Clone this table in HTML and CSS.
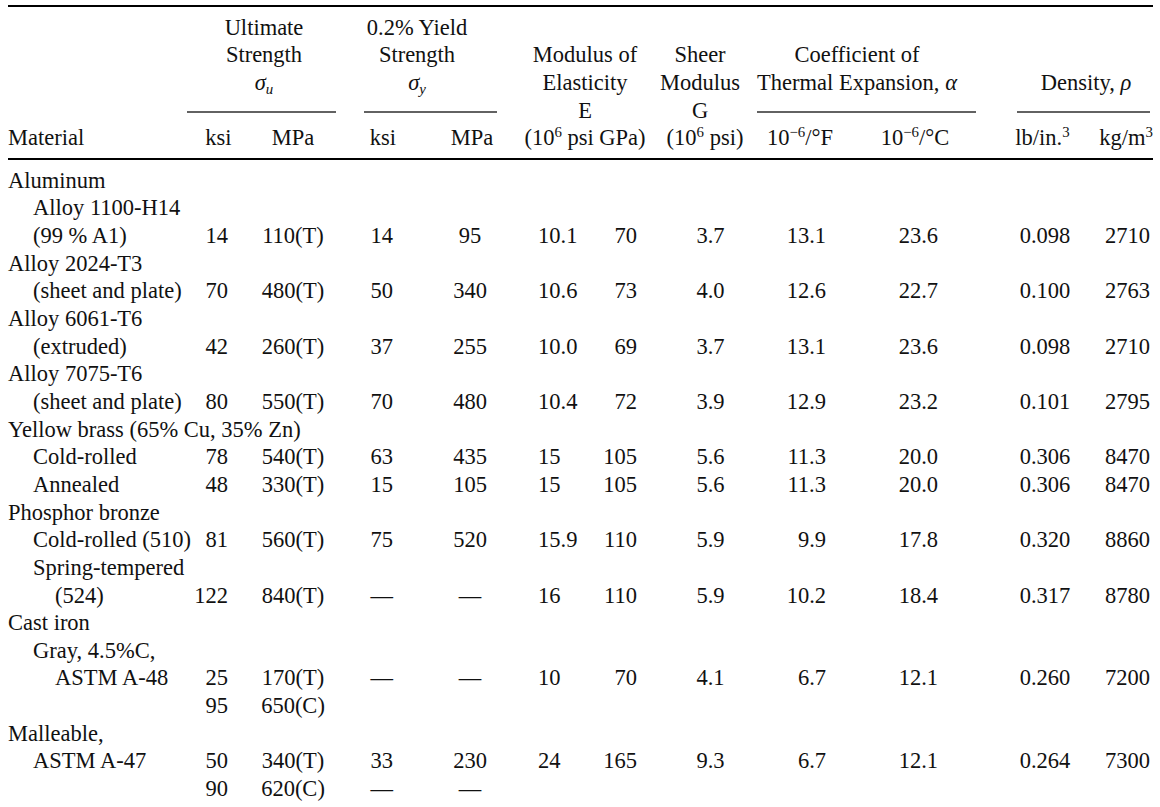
FILE: index.html
```html
<!DOCTYPE html>
<html lang="en">
<head>
<meta charset="utf-8">
<title>Mechanical Properties of Materials</title>
<link rel="stylesheet" href="styles.css">
</head>
<body>
<div class="sheet" role="table">
  <div class="head">
    <div class="row">
      <div></div>
      <div class="span2 c ult">Ultimate</div>
      <div class="span2 c yld">0.2% Yield</div>
    </div>
    <div class="row">
      <div></div>
      <div class="span2 c ult">Strength</div>
      <div class="span2 c yld">Strength</div>
      <div class="span2 c">Modulus of</div>
      <div class="c shr">Sheer</div>
      <div class="span2 c coef">Coefficient of</div>
    </div>
    <div class="row">
      <div></div>
      <div class="span2 c ult"><i>σ<sub>u</sub></i></div>
      <div class="span2 c yld"><i>σ<sub>y</sub></i></div>
      <div class="span2 c">Elasticity</div>
      <div class="c shr">Modulus</div>
      <div class="span2 c coef">Thermal Expansion, <i>α</i></div>
      <div class="span2 c dens">Density, <i>ρ</i></div>
    </div>
    <div class="row">
      <div></div>
      <div class="span2"><div class="rule"></div></div>
      <div class="span2"><div class="rule r-yld"></div></div>
      <div class="span2 c">E</div>
      <div class="c shr">G</div>
      <div class="span2"><div class="rule r-coef"></div></div>
      <div class="span2"><div class="rule r-dens"></div></div>
    </div>
    <div class="row units">
      <div>Material</div>
      <div>ksi</div>
      <div>MPa</div>
      <div>ksi</div>
      <div>MPa</div>
      <div class="span2">(10<sup>6</sup> psi GPa)</div>
      <div>(10<sup>6</sup> psi)</div>
      <div>10<sup>−6</sup>/°F</div>
      <div>10<sup>−6</sup>/°C</div>
      <div>lb/in.<sup>3</sup></div>
      <div>kg/m<sup>3</sup></div>
    </div>
  </div>

  <div class="body">
    <div class="row"><div class="full">Aluminum</div></div>
    <div class="row"><div class="full l1">Alloy 1100-H14</div></div>
    <div class="row data"><div class="l1">(99 % A1)</div><div>14</div><div>110(T)</div><div>14</div><div>95</div><div>10.1</div><div>70</div><div>3.7</div><div>13.1</div><div>23.6</div><div>0.098</div><div>2710</div></div>
    <div class="row"><div class="full">Alloy 2024-T3</div></div>
    <div class="row data"><div class="l1">(sheet and plate)</div><div>70</div><div>480(T)</div><div>50</div><div>340</div><div>10.6</div><div>73</div><div>4.0</div><div>12.6</div><div>22.7</div><div>0.100</div><div>2763</div></div>
    <div class="row"><div class="full">Alloy 6061-T6</div></div>
    <div class="row data"><div class="l1">(extruded)</div><div>42</div><div>260(T)</div><div>37</div><div>255</div><div>10.0</div><div>69</div><div>3.7</div><div>13.1</div><div>23.6</div><div>0.098</div><div>2710</div></div>
    <div class="row"><div class="full">Alloy 7075-T6</div></div>
    <div class="row data"><div class="l1">(sheet and plate)</div><div>80</div><div>550(T)</div><div>70</div><div>480</div><div>10.4</div><div>72</div><div>3.9</div><div>12.9</div><div>23.2</div><div>0.101</div><div>2795</div></div>
    <div class="row"><div class="full">Yellow brass (65% Cu, 35% Zn)</div></div>
    <div class="row data"><div class="l1">Cold-rolled</div><div>78</div><div>540(T)</div><div>63</div><div>435</div><div>15</div><div>105</div><div>5.6</div><div>11.3</div><div>20.0</div><div>0.306</div><div>8470</div></div>
    <div class="row data"><div class="l1">Annealed</div><div>48</div><div>330(T)</div><div>15</div><div>105</div><div>15</div><div>105</div><div>5.6</div><div>11.3</div><div>20.0</div><div>0.306</div><div>8470</div></div>
    <div class="row"><div class="full">Phosphor bronze</div></div>
    <div class="row data"><div class="l1">Cold-rolled (510)</div><div>81</div><div>560(T)</div><div>75</div><div>520</div><div>15.9</div><div>110</div><div>5.9</div><div>9.9</div><div>17.8</div><div>0.320</div><div>8860</div></div>
    <div class="row"><div class="full l1">Spring-tempered</div></div>
    <div class="row data"><div class="l2">(524)</div><div>122</div><div>840(T)</div><div>—</div><div>—</div><div>16</div><div>110</div><div>5.9</div><div>10.2</div><div>18.4</div><div>0.317</div><div>8780</div></div>
    <div class="row"><div class="full">Cast iron</div></div>
    <div class="row"><div class="full l1">Gray, 4.5%C,</div></div>
    <div class="row data"><div class="l2">ASTM A-48</div><div>25</div><div>170(T)</div><div>—</div><div>—</div><div>10</div><div>70</div><div>4.1</div><div>6.7</div><div>12.1</div><div>0.260</div><div>7200</div></div>
    <div class="row data"><div></div><div>95</div><div>650(C)</div></div>
    <div class="row"><div class="full">Malleable,</div></div>
    <div class="row data"><div class="l1">ASTM A-47</div><div>50</div><div>340(T)</div><div>33</div><div>230</div><div>24</div><div>165</div><div>9.3</div><div>6.7</div><div>12.1</div><div>0.264</div><div>7300</div></div>
    <div class="row data"><div></div><div>90</div><div>620(C)</div><div>—</div><div>—</div></div>
  </div>
</div>
</body>
</html>
```

FILE: styles.css
```css
:root {
  --cols: 179px 63px 86px 94px 90px 70px 60px 95px 110px 145px 85px 68px;
}

* {
  box-sizing: border-box;
}

html,
body {
  margin: 0;
  background: #ffffff;
}

body {
  color: #111111;
  font-family: "Liberation Serif", "Times New Roman", serif;
  font-size: 22.5px;
}

.sheet {
  margin: 5px 0 0 8px;
  width: 1145px;
  border-top: 2px solid #000000;
}

.head {
  padding-top: 6.6px;
  padding-bottom: 6.2px;
  border-bottom: 2px solid #000000;
}

.body {
  padding-top: 6.6px;
}

.row {
  display: grid;
  grid-template-columns: var(--cols);
  line-height: 27.65px;
  white-space: nowrap;
}

.row > div {
  min-width: 0;
}

.full {
  grid-column: 1 / -1;
}

.span2 {
  grid-column: span 2;
}

.c {
  text-align: center;
}

sup,
sub {
  line-height: 0;
  font-size: 0.66em;
}

sup {
  vertical-align: 0.55em;
}

sub {
  vertical-align: -0.3em;
}

/* spanning header groups */
.ult {
  padding-left: 5px;
}

.yld {
  padding-right: 22px;
}

.shr {
  padding-left: 5px;
}

.coef {
  padding-right: 31px;
}

.dens {
  padding-left: 19px;
}

.rule {
  height: 0;
  margin-top: 14.5px;
  border-top: 2px solid #626262;
}

.r-yld {
  margin-left: 28px;
  margin-right: 23px;
}

.r-coef {
  margin-left: 12px;
  margin-right: 24px;
}

.r-dens {
  margin-left: 17px;
  margin-right: 3px;
}

/* unit row */
.units > div {
  text-align: center;
}

.units > div:nth-child(1) {
  text-align: left;
}

.units > div:nth-child(5) {
  padding-right: 6px;
}

.units > div:nth-child(7) {
  padding-left: 15px;
}

.units > div:nth-child(9) {
  padding-right: 25px;
}

.units > div:nth-child(11) {
  text-align: right;
}

/* material name indents */
.l1 {
  padding-left: 25px;
}

.l2 {
  padding-left: 47px;
}

/* data columns */
.data > div:nth-child(2) {
  text-align: right;
  padding-right: 22px;
}

.data > div:nth-child(3) {
  text-align: center;
}

.data > div:nth-child(4) {
  text-align: right;
  padding-right: 37px;
}

.data > div:nth-child(5) {
  text-align: center;
  padding-right: 10px;
}

.data > div:nth-child(6) {
  text-align: left;
  padding-left: 18px;
}

.data > div:nth-child(7) {
  text-align: right;
  padding-right: 13px;
}

.data > div:nth-child(8) {
  text-align: center;
  padding-left: 26px;
}

.data > div:nth-child(9) {
  text-align: right;
  padding-right: 29px;
}

.data > div:nth-child(10) {
  text-align: right;
  padding-right: 62px;
}

.data > div:nth-child(11) {
  text-align: center;
  padding-left: 5px;
}

.data > div:nth-child(12) {
  text-align: right;
  padding-right: 3px;
}
```
